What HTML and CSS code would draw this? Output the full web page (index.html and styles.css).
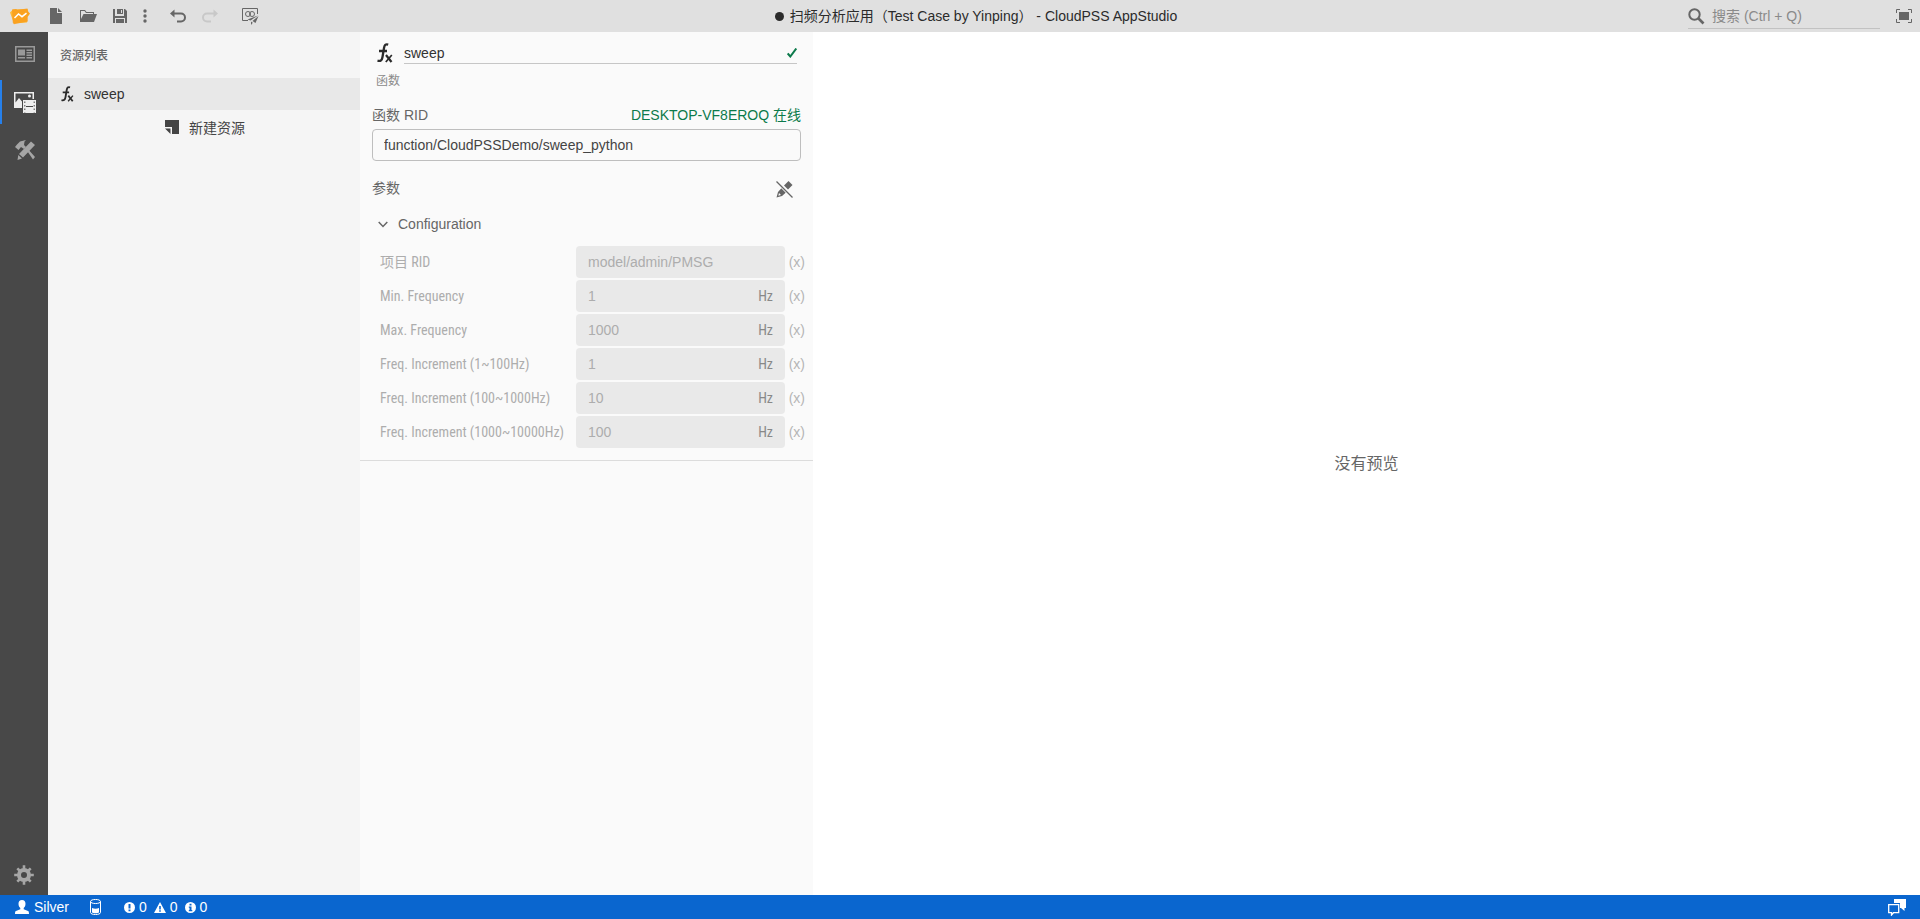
FILE: index.html
```html
<!DOCTYPE html>
<html lang="zh-CN">
<head>
<meta charset="utf-8">
<title>扫频分析应用 - CloudPSS AppStudio</title>
<link rel="stylesheet" href="styles.css">
</head>
<body>
<div class="app">
  <header class="titlebar">
    <div class="toolbar">
      <button class="tool logo" aria-label="CloudPSS"><svg width="20" height="17" viewBox="0 0 20 17"><path fill="#fdb93a" d="M0 4.500 3 1.500 17.500 1l1 3.500 1.500 1-2.500 3.500-.5 5.500L4 15.500z"/><path fill="#f99d1c" d="M2 1.500 6 1l1.500.8L17.500.5l.5 3 1.800 2-2.300 3.200.3 4.800L7 15.500l-3 .8-1.200-1.500z" opacity=".85"/><path fill="none" stroke="#fff" stroke-width="1.500" d="m4.500 10 4-4 3.500 2.700 4.500-3.500"/></svg></button>
      <button class="tool" aria-label="新建"><svg width="12" height="16" viewBox="0 0 12 16"><path d="M0 0h7v5h5v11H0zM8 0l4 4H8z"/></svg></button>
      <button class="tool" aria-label="打开"><svg width="17" height="14" viewBox="0 0 17 14"><path d="M0 13V1h5l1.500 2H14v2h-1V4H6L4.500 2H1v8l2.500-5H17l-3 8z"/></svg></button>
      <button class="tool" aria-label="保存"><svg width="14" height="14" viewBox="0 0 14 14"><path d="M0 0h2v7h9V0h1l2 2v12h-2V9H2v5H0zM4 0h6v5H4zm4 1v3h1V1zM3 10h8v4H3z" fill-rule="evenodd"/></svg></button>
      <button class="tool narrow" aria-label="更多"><svg width="4" height="14" viewBox="0 0 4 14"><circle cx="2" cy="2" r="1.700"/><circle cx="2" cy="7" r="1.700"/><circle cx="2" cy="12" r="1.700"/></svg></button>
      <button class="tool gap" aria-label="撤销"><svg width="16" height="14" viewBox="0 0 16 14"><path d="M0 4.500 4.500.500v8z"/><path class="line" stroke-width="2" d="M3 4.500h8a4 4 0 0 1 0 8H7"/></svg></button>
      <button class="tool faded" disabled aria-label="重做"><svg width="16" height="14" viewBox="0 0 16 14"><path d="M16 4.500 11.500.500v8z"/><path class="line" stroke-width="2" d="M13 4.500H5a4 4 0 0 0 0 8h4"/></svg></button>
      <button class="tool gap" aria-label="发布"><svg width="17" height="17" viewBox="0 0 17 17"><path class="line" d="M6 12.500H.500v-12h15V6"/><circle class="line" cx="6" cy="6" r="2.500"/><circle class="line" cx="10" cy="6" r="2.500"/><path d="M16 7.500 5.500 11.500l3 1zM16.500 8l-3 7-3-2zM9 13.500l1.800 1.200L9 17z"/></svg></button>
    </div>
    <h1 class="title"><span class="dot"></span>扫频分析应用（Test Case by Yinping） - CloudPSS AppStudio</h1>
    <div class="tools-right">
      <label class="search"><svg width="17" height="17" viewBox="0 0 17 17"><circle class="line" cx="6.500" cy="6.500" r="5.200" stroke-width="2"/><path class="line" stroke-width="2.600" d="m10.500 10.500 5 5"/></svg><input type="text" placeholder="搜索 (Ctrl + Q)" aria-label="搜索"></label>
      <button class="tool" aria-label="全屏"><svg width="16" height="14" viewBox="0 0 16 14"><path d="M3 3h10v8H3z"/><path class="line" d="M4 .5H.5V4M12 .5h3.500V4M4 13.500H.5V10M12 13.500h3.500V10"/></svg></button>
    </div>
  </header>
  <div class="workbench">
    <nav class="activity">
      <button class="act" aria-label="布局"><svg width="20" height="16" viewBox="0 0 20 16"><path fill="none" stroke="#999" stroke-width="1.500" d="M.75.75h18.500v14.500H.75z"/><path fill="#999" d="M3 3.500h7v6H3zM11.500 3.500H17V5h-5.500zm0 2.500H17v1.500h-5.500zm0 2.500H17V10h-5.500zM3 11h7v1.500H3zm8.500 0H17v1.500h-5.500z"/></svg></button>
      <button class="act active" aria-label="资源"><svg width="22" height="21" viewBox="0 0 22 21"><path fill="#eee" fill-rule="evenodd" d="M0 0h20v7h-1.500V1.500h-17v9L5 6l3 3.500V16H0z"/><circle cx="15.500" cy="4" r="1.500" fill="#eee"/><path fill="#eee" d="M9 8h13v13H9z"/><path stroke="#484848" d="M12 14.500h7"/><path stroke="#484848" stroke-dasharray="1.500 2" d="M10.800 9.500v11M20.200 9.500v11"/></svg></button>
      <button class="act" aria-label="工具"><svg width="20" height="20" viewBox="0 0 20 20"><path fill="#a6a6a6" d="M0 7 2 4.500 5 1.500 11 0 9.500 1.500 9 5l2 2-2 2-3-2-2.500 3zM12.500 11.500l1.500-1.200L20 17l-2 2.500z"/><path fill="#a6a6a6" d="M16 1.500 20 5 8 17.500 4 14zM3.300 15 7 18.400 2.500 20z"/></svg></button>
      <button class="act bottom" aria-label="设置"><svg width="20" height="20" viewBox="-10 -10 20 20"><g stroke="#a6a6a6" stroke-width="2.600"><path d="M0-9.800V-5M0 9.800V5M-9.800 0H-5M9.800 0H5M-6.700-6.700-4-4M6.700 6.700 4 4M-6.700 6.700-4 4M6.700-6.700 4-4"/></g><circle r="5" fill="none" stroke="#a6a6a6" stroke-width="4"/></svg></button>
    </nav>
    <aside class="resources">
      <h2 class="heading">资源列表</h2>
      <button class="resource"><svg width="13" height="16" viewBox="0 0 16 20"><use href="#fx"/></svg>sweep</button>
      <button class="create"><svg width="14" height="14" viewBox="0 0 14 14"><path d="M0 0h14v14H7V7H0zM0 8.500h5.500V14z"/></svg>新建资源</button>
    </aside>
    <section class="inspector">
      <div class="name-row">
        <svg width="16" height="20" viewBox="0 0 16 20"><g id="fx" fill="none" stroke="#2b2b2b"><path stroke-width="2.300" d="M11.200 1.600C8.500.8 7.500 2 7 5L5.500 14c-.5 3-1.700 4.500-5 3.700M2 8h8"/><path stroke-width="2.200" d="m9 12 5.500 7"/><path stroke-width="1.700" d="m14.800 12-6 7"/></g></svg>
        <div class="name-field"><input type="text" value="sweep" aria-label="名称"><svg width="10" height="10" viewBox="0 0 10 10"><path fill="none" stroke="#0c7a4b" stroke-width="2" d="m.7 5.500 2.600 3 6-8"/></svg></div>
      </div>
      <p class="kind">函数</p>
      <div class="rid-head"><label for="rid">函数 RID</label><span class="online">DESKTOP-VF8EROQ 在线</span></div>
      <input class="rid" id="rid" type="text" value="function/CloudPSSDemo/sweep_python">
      <div class="param-head"><h2>参数</h2><button class="plain" aria-label="编辑"><svg width="17" height="17" viewBox="0 0 17 17"><path d="m12.500 0 4 4-4.500 4.500-4-4zM6.500 6 11 10.500 6 15 .500 16.500 2 11z"/><path fill="#fafafa" d="m3 12 2 2-2.700.8z"/><path stroke="#fafafa" stroke-width="3" d="m1 1 15 15"/><path class="line" stroke-width="1.300" d="m.5.500 16 16"/></svg></button></div>
      <button class="group"><svg width="10" height="7" viewBox="0 0 10 7"><path class="line" stroke-width="1.500" d="m.7.900 4.300 4.500L9.300.9"/></svg>Configuration</button>
      <div class="params">
        <div class="param"><label for="p1">项目 RID</label><div class="field"><input id="p1" disabled value="model/admin/PMSG"></div><button class="expr" disabled>(x)</button></div>
        <div class="param"><label for="p2">Min. Frequency</label><div class="field"><input id="p2" disabled value="1"><span class="unit">Hz</span></div><button class="expr" disabled>(x)</button></div>
        <div class="param"><label for="p3">Max. Frequency</label><div class="field"><input id="p3" disabled value="1000"><span class="unit">Hz</span></div><button class="expr" disabled>(x)</button></div>
        <div class="param"><label for="p4">Freq. Increment (1~100Hz)</label><div class="field"><input id="p4" disabled value="1"><span class="unit">Hz</span></div><button class="expr" disabled>(x)</button></div>
        <div class="param"><label for="p5">Freq. Increment (100~1000Hz)</label><div class="field"><input id="p5" disabled value="10"><span class="unit">Hz</span></div><button class="expr" disabled>(x)</button></div>
        <div class="param"><label for="p6">Freq. Increment (1000~10000Hz)</label><div class="field"><input id="p6" disabled value="100"><span class="unit">Hz</span></div><button class="expr" disabled>(x)</button></div>
      </div>
    </section>
    <main class="preview">没有预览</main>
  </div>
  <footer class="status">
    <button class="stat user"><svg width="14" height="14" viewBox="0 0 14 14"><path d="M7 0c2.300 0 3.500 1.500 3.500 3.800C10.500 6 9.600 7.300 8.700 8v1.300L13 11c.7.300 1 1 1 3H0c0-2 .3-2.700 1-3l4.300-1.700V8C4.400 7.300 3.500 6 3.500 3.800 3.500 1.500 4.700 0 7 0z"/></svg>Silver</button>
    <button class="stat storage" aria-label="存储"><svg width="11" height="16" viewBox="0 0 11 16"><path fill="none" stroke="#fff" d="M.5 2.500v11c0 2.700 10 2.700 10 0v-11c0-2.700-10-2.700-10 0zc0 2.700 10 2.700 10 0"/><path d="M2 9c2 1 5 1 7 0v4.500c-1 1-6 1-7 0z"/></svg></button>
    <button class="stat"><svg width="11" height="11" viewBox="0 0 11 11"><path fill-rule="evenodd" d="M5.500 0a5.500 5.500 0 1 0 0 11 5.500 5.500 0 0 0 0-11zM4.500 2h2v4.500h-2zm0 5.500h2v1.700h-2z"/></svg>0</button>
    <button class="stat"><svg width="12" height="11" viewBox="0 0 12 11"><path fill-rule="evenodd" d="m6 0 6 11H0zM5.200 4h1.600v3.500H5.200zm0 4.300h1.600v1.500H5.200z"/></svg>0</button>
    <button class="stat"><svg width="11" height="11" viewBox="0 0 11 11"><path fill-rule="evenodd" d="M5.500 0a5.500 5.500 0 1 0 0 11 5.500 5.500 0 0 0 0-11zM4.500 1.800h2v1.700h-2zM3.800 4.500h2.700V8h.8v1.200H3.800V8h.7V5.700h-.7z"/></svg>0</button>
    <button class="stat chat" aria-label="消息"><svg width="18" height="17" viewBox="0 0 18 17"><path d="M6 0h12v9h-1.500v3L13 9h-1V4H6z"/><path fill="none" stroke="#fff" stroke-width="1.300" d="M.7 5.700h10v8H5.500L3.500 16v-2.300H.7z"/></svg></button>
  </footer>
</div>
</body>
</html>
```

FILE: styles.css
```css
* { box-sizing: border-box; }
body { margin: 0; }
body, button, input { font-family: "Liberation Sans", "Noto Sans CJK SC", sans-serif; font-size: 14px; }
button, input { border: 0; padding: 0; margin: 0; background: none; color: inherit; outline: 0; }
h1, h2, p { margin: 0; font-size: 14px; font-weight: 400; }
svg { display: block; flex: none; fill: currentColor; }
.line { fill: none; stroke: currentColor; }

.app { display: flex; flex-direction: column; height: 100vh; color: #333; background: #fff; line-height: 20px; }

.titlebar { display: grid; grid-template-columns: 1fr auto 1fr; align-items: center; height: 32px; background: #e0e0e0; color: #666; }
.toolbar { display: flex; }
.tool { display: flex; align-items: center; justify-content: center; width: 32px; height: 32px; }
.tool.logo { width: 40px; }
.tool.narrow { width: 18px; }
.tool.gap { margin-left: 8px; }
.tool.faded { color: #c8c8c8; }
.title { display: flex; align-items: center; gap: 6px; color: #2b2b2b; margin-left: 32px; white-space: pre; }
.dot { width: 9px; height: 9px; border-radius: 50%; background: #2b2b2b; }
.tools-right { display: flex; justify-content: flex-end; gap: 8px; }
.search { display: flex; align-items: center; gap: 7px; width: 192px; height: 25px; margin-top: 4px; border-bottom: 1px solid #c2c2c2; }
.search input { flex: 1; min-width: 0; }
.search input::placeholder { color: #8a8a8a; opacity: 1; }

.workbench { display: flex; flex: 1; min-height: 0; }
.activity { display: flex; flex-direction: column; gap: 4px; width: 48px; background: #484848; }
.act { display: flex; align-items: center; justify-content: center; height: 44px; border-left: 2px solid transparent; }
.act.active { border-color: #2680eb; }
.act.bottom { height: 40px; margin-top: auto; border: 0; }

.resources { display: flex; flex-direction: column; width: 312px; background: #f5f5f5; }
.heading { padding: 14px 12px 12px; font-size: 12px; font-weight: 500; color: #666; }
.resource { display: flex; align-items: center; gap: 10px; height: 32px; padding: 0 13px; background: #e8e8e8; color: #333; }
.create { display: flex; align-items: center; justify-content: center; gap: 10px; height: 34px; padding-left: 2px; color: #444; }

.inspector { width: 453px; background: #fafafa; color: #666; }
.name-row { display: flex; align-items: center; gap: 11px; padding: 10px 16px 0 17px; }
.name-field { display: flex; align-items: center; flex: 1; height: 22px; border-bottom: 1px solid #c6c6c6; }
.name-field input { flex: 1; color: #333; }
.kind { padding: 7px 16px; font-size: 12px; color: #8a8a8a; }
.rid-head { display: flex; justify-content: space-between; padding: 7px 12px 4px; }
.online { color: #0c7a4b; }
.rid { display: block; width: calc(100% - 24px); height: 32px; margin: 0 12px; padding: 0 11px; border: 1px solid #bebebe; border-radius: 4px; color: #444; }
.param-head { display: flex; align-items: center; justify-content: space-between; padding: 16px 20px 0 12px; }
.plain { padding-top: 4px; }
.group { display: flex; align-items: center; gap: 10px; height: 32px; margin-top: 10px; padding: 0 18px; }
.params { display: grid; grid-template-columns: minmax(0, 1fr); gap: 2px; padding: 6px 8px 12px 20px; border-bottom: 1px solid #dcdcdc; }
.param { display: grid; grid-template-columns: 196px minmax(0, 1fr) 20px; align-items: center; color: #adadad; }
.param label, .unit { font-family: "Roboto Condensed", "Liberation Sans Narrow", "Noto Sans CJK SC", sans-serif; }
.field { display: flex; align-items: center; height: 32px; padding: 0 12px; border-radius: 4px; background: #e9e9e9; }
.field input { flex: 1; min-width: 0; color: #adadad; }
.unit { color: #888; }
.expr { color: #b5b5b5; text-align: right; }

.preview { display: flex; flex: 1; align-items: center; justify-content: center; font-size: 16px; color: #666; }

.status { display: flex; align-items: center; height: 24px; padding: 0 14px 0 15px; background: #0a66cf; color: #fff; }
.stat { display: flex; align-items: center; gap: 4px; height: 24px; margin-right: 7px; }
.user { margin-right: 21px; gap: 5px; }
.storage { margin-right: 23px; }
.chat { margin: 0 0 0 auto; }
```
